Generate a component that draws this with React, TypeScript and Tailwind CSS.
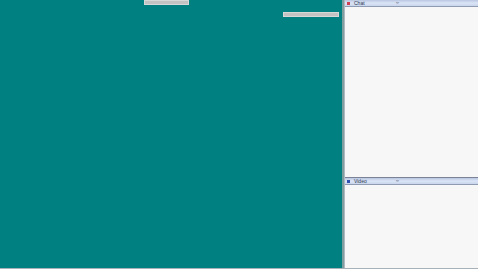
import React from "react";

function Header({ title, dot }: { title: string; dot: string }) {
  return (
    <div className="relative flex h-[7px] items-center border-b border-[#8f9bb3] bg-gradient-to-b from-[#b9c6e0] via-[#dbe5f7] to-[#c9d5ec] pl-[2px] font-['Liberation_Sans',sans-serif] text-[5px] leading-none text-[#2a3550]">
      <span className={`mr-[4px] h-[3px] w-[3px] ${dot}`} />
      <span className="w-[42px]">{title}</span>
      <span className="text-[4px] text-[#404a60]">✏</span>
    </div>
  );
}

export default function App() {
  return (
    <div className="flex h-[269px] w-[478px] flex-col overflow-hidden bg-[#f7f7f7]">
      <div className="flex flex-1">
        <div className="relative w-[342px] bg-[#008080]">
          <div className="absolute left-[144px] top-0 h-[5px] w-[45px] border border-[#d8d8d8] bg-[#c3c3c3]" />
          <div className="absolute left-[283px] top-[12px] h-[5px] w-[56px] border border-[#d8d8d8] bg-[#c3c3c3]" />
        </div>
        <div className="w-[2px] bg-[#7f9ea0]" />
        <div className="flex flex-1 flex-col border-l border-[#b0b8c0]">
          <div className="flex h-[177px] flex-col">
            <Header title="Chat" dot="bg-[#d04050]" />
            <div className="flex-1 bg-[#f7f7f7]" />
          </div>
          <div className="flex flex-1 flex-col border-t border-[#7a8398]">
            <Header title="Video" dot="bg-[#3050b0]" />
            <div className="flex-1 bg-[#f7f7f7]" />
          </div>
        </div>
      </div>
      <div className="h-[1px] bg-[#a8b0b8]" />
    </div>
  );
}
